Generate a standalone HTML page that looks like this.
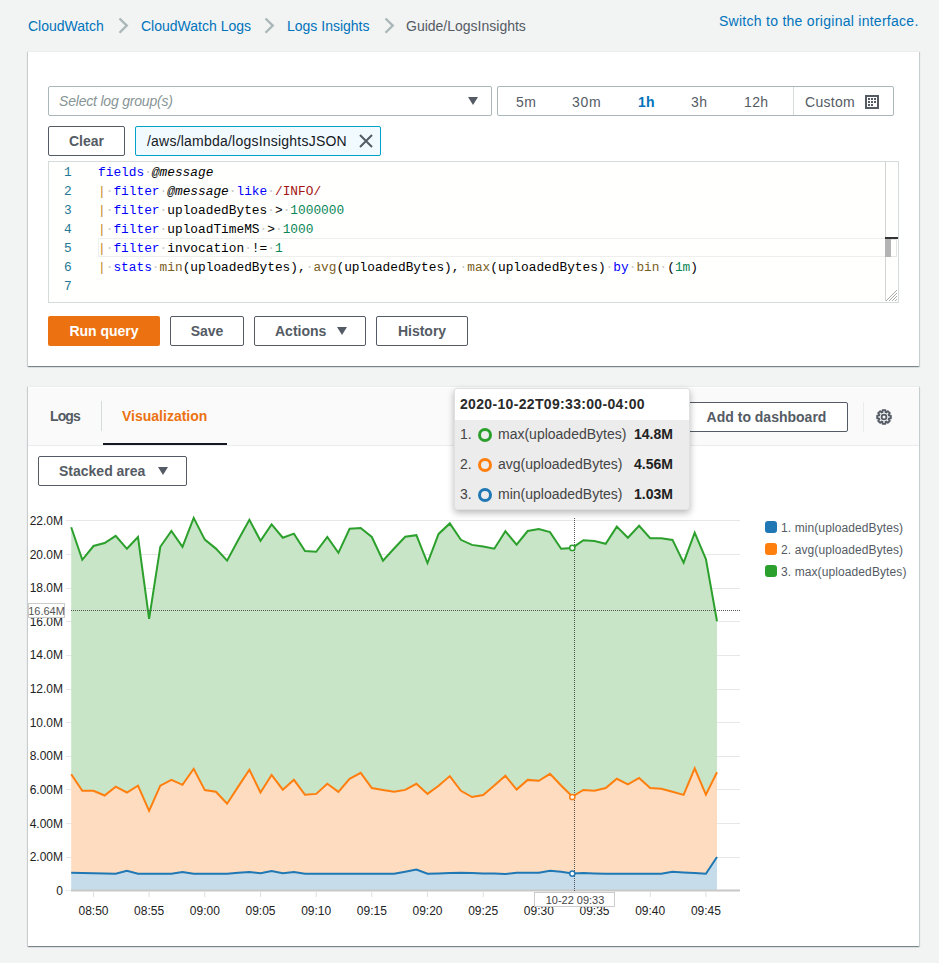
<!DOCTYPE html>
<html><head><meta charset="utf-8">
<style>
*{box-sizing:border-box;margin:0;padding:0}
html,body{width:939px;height:963px;overflow:hidden;background:#f2f3f3;font-family:"Liberation Sans",sans-serif;color:#16191f;position:relative}
.abs{position:absolute}
.crumb{position:absolute;top:18px;font-size:14px;color:#0073bb;white-space:nowrap}
.crumb.g{color:#545b64}
.sep{position:absolute;top:18px;width:9px;height:9px;border-right:1.6px solid #aab7b8;border-top:1.6px solid #aab7b8;transform:rotate(45deg)}
.panel{position:absolute;background:#fff;border-top:1px solid #eaeded;box-shadow:0 1px 1px 0 rgba(0,28,36,.35),1px 1px 1px 0 rgba(0,28,36,.12),-1px 1px 1px 0 rgba(0,28,36,.12)}
.btn{position:absolute;border:1px solid #545b64;border-radius:2px;background:#fff;color:#545b64;font-weight:bold;font-size:14px;text-align:center;white-space:nowrap}
.mono{font-family:"Liberation Mono",monospace;font-size:12.82px;white-space:pre}
.mono .k{color:#0000ff}
.code{color:#000}
.ln{color:#237893;line-height:19px}
.code{line-height:19px}
.code em{font-style:italic}
.code .p{color:#c4891c}
.code .r{color:#a31515}
.code .n{color:#098658}
.code .f{color:#795e26}
.code .d{font-style:normal;color:#c8c8c8}
.tab{font-size:14px;font-weight:bold}
.leg{font-size:12px;color:#545b64;letter-spacing:.1px}
.tt{font-size:14px;color:#444;white-space:nowrap}
.circ{width:14px;height:14px;border:3px solid;border-radius:50%}
</style></head><body>
<!-- breadcrumb -->
<div class="crumb" style="left:28px">CloudWatch</div>
<svg class="abs" style="left:118px;top:17px" width="12" height="18" viewBox="0 0 12 18"><polyline points="1.5,1.5 8.8,8.6 1.5,15.7" fill="none" stroke="#aab7b8" stroke-width="2.3"/></svg>
<div class="crumb" style="left:141px">CloudWatch Logs</div>
<svg class="abs" style="left:264px;top:17px" width="12" height="18" viewBox="0 0 12 18"><polyline points="1.5,1.5 8.8,8.6 1.5,15.7" fill="none" stroke="#aab7b8" stroke-width="2.3"/></svg>
<div class="crumb" style="left:287px">Logs Insights</div>
<svg class="abs" style="left:384px;top:17px" width="12" height="18" viewBox="0 0 12 18"><polyline points="1.5,1.5 8.8,8.6 1.5,15.7" fill="none" stroke="#aab7b8" stroke-width="2.3"/></svg>
<div class="crumb g" style="left:406px">Guide/LogsInsights</div>
<div class="crumb" style="left:719px;top:13px;letter-spacing:.27px">Switch to the original interface.</div>

<!-- panel 1 -->
<div class="panel" style="left:28px;top:51px;width:891px;height:315px"></div>
<div class="abs" style="left:48px;top:86px;width:444px;height:30px;border:1px solid #aab7b8;border-radius:2px;background:#fff"></div>
<div class="abs" style="left:59px;top:93px;font-size:14px;font-style:italic;color:#879596;letter-spacing:-.2px">Select log group(s)</div>
<div class="abs" style="left:468px;top:97px;width:0;height:0;border-left:5.5px solid transparent;border-right:5.5px solid transparent;border-top:8px solid #545b64"></div>

<div class="abs" style="left:497px;top:86px;width:397px;height:30px;border:1px solid #aab7b8;border-radius:2px"></div>
<div class="abs" style="left:793px;top:87px;width:1px;height:28px;background:#d5dbdb"></div>
<div class="abs" style="left:516px;top:94px;font-size:14px;color:#545b64;letter-spacing:.5px">5m</div>
<div class="abs" style="left:572px;top:94px;font-size:14px;color:#545b64;letter-spacing:.7px">30m</div>
<div class="abs" style="left:638px;top:94px;font-size:14px;color:#0073bb;font-weight:bold;letter-spacing:.3px">1h</div>
<div class="abs" style="left:691px;top:94px;font-size:14px;color:#545b64;letter-spacing:.5px">3h</div>
<div class="abs" style="left:744px;top:94px;font-size:14px;color:#545b64;letter-spacing:.4px">12h</div>
<div class="abs" style="left:805px;top:94px;font-size:14px;color:#545b64;letter-spacing:.3px">Custom</div>
<svg class="abs" style="left:865px;top:95px" width="14" height="14" viewBox="0 0 14 14"><rect x="1" y="1" width="12" height="12" fill="none" stroke="#545b64" stroke-width="2"/><g fill="#545b64"><rect x="3" y="3" width="2" height="2"/><rect x="6" y="3" width="2" height="2"/><rect x="9" y="3" width="2" height="2"/><rect x="3" y="6" width="2" height="2"/><rect x="6" y="6" width="2" height="2"/><rect x="9" y="6" width="2" height="2"/><rect x="3" y="9" width="2" height="2"/><rect x="6" y="9" width="2" height="2"/></g></svg>

<div class="btn" style="left:48px;top:126px;width:77px;height:30px;line-height:28px">Clear</div>
<div class="abs" style="left:135px;top:126px;width:246px;height:30px;border:1px solid #00a1c9;border-radius:2px;background:#f1faff"></div>
<div class="abs" style="left:147px;top:133px;font-size:14px;color:#16191f;letter-spacing:.22px">/aws/lambda/logsInsightsJSON</div>
<svg class="abs" style="left:358px;top:133px" width="16" height="16" viewBox="0 0 16 16"><path d="M2 2L14 14M14 2L2 14" stroke="#545b64" stroke-width="2"/></svg>

<!-- editor -->
<div class="abs" style="left:48px;top:161px;width:851px;height:142px;border:1px solid #d5dbdb;background:#fffffd"></div>

<!-- editor content -->
<div class="abs" style="left:98px;top:238px;width:787px;height:19px;border:1px solid #eeeeee;border-right:none"></div>
<div class="abs" style="left:885px;top:162px;width:1px;height:139px;background:#d5d5d5"></div>
<div class="abs" style="left:885px;top:237px;width:13px;height:2px;background:#333"></div>
<div class="abs" style="left:885px;top:239px;width:6px;height:18px;background:#b4b4b4"></div>
<div class="abs" style="left:891px;top:239px;width:6px;height:18px;border:1px solid #e5e5e5;border-left:none"></div>
<svg class="abs" style="left:884px;top:288px" width="14" height="14" viewBox="0 0 14 14"><g stroke="#aaa" stroke-width="1"><line x1="2" y1="13" x2="13" y2="2"/><line x1="5" y1="13" x2="13" y2="5"/><line x1="8" y1="13" x2="13" y2="8"/><line x1="11" y1="13" x2="13" y2="11"/></g></svg>
<div class="abs mono ln" style="left:64px;top:163px">1
2
3
4
5
6
7</div>
<div class="abs mono code" style="left:98px;top:163px"><span class="k">fields</span><i class="d">·</i><em>@message</em>
<span class="p">|</span><i class="d">·</i><span class="k">filter</span><i class="d">·</i><em>@message</em><i class="d">·</i><span class="k">like</span><i class="d">·</i><span class="r">/INFO/</span>
<span class="p">|</span><i class="d">·</i><span class="k">filter</span><i class="d">·</i>uploadedBytes<i class="d">·</i>&gt;<i class="d">·</i><span class="n">1000000</span>
<span class="p">|</span><i class="d">·</i><span class="k">filter</span><i class="d">·</i>uploadTimeMS<i class="d">·</i>&gt;<i class="d">·</i><span class="n">1000</span>
<span class="p">|</span><i class="d">·</i><span class="k">filter</span><i class="d">·</i>invocation<i class="d">·</i>!=<i class="d">·</i><span class="n">1</span>
<span class="p">|</span><i class="d">·</i><span class="k">stats</span><i class="d">·</i><span class="f">min</span>(uploadedBytes),<i class="d">·</i><span class="f">avg</span>(uploadedBytes),<i class="d">·</i><span class="f">max</span>(uploadedBytes)<i class="d">·</i><span class="k">by</span><i class="d">·</i><span class="f">bin</span><i class="d">·</i>(<span class="n">1m</span>)
</div>

<!-- buttons -->
<div class="abs" style="left:48px;top:316px;width:112px;height:30px;background:#ec7211;border-radius:2px;color:#fff;font-weight:bold;font-size:14px;text-align:center;line-height:30px">Run query</div>
<div class="btn" style="left:170px;top:316px;width:74px;height:30px;line-height:28px">Save</div>
<div class="btn" style="left:254px;top:316px;width:112px;height:30px;line-height:28px;text-align:left;padding-left:20px">Actions</div>
<div class="abs" style="left:337px;top:327px;width:0;height:0;border-left:5.5px solid transparent;border-right:5.5px solid transparent;border-top:8px solid #545b64"></div>
<div class="btn" style="left:376px;top:316px;width:92px;height:30px;line-height:28px">History</div>

<!-- panel 2 -->
<div class="panel" style="left:28px;top:386px;width:891px;height:560px"></div>

<!-- tabs header -->
<div class="abs" style="left:28px;top:388px;width:891px;height:58px;background:#fafafa;border-bottom:1px solid #eaeded"></div>
<div class="abs tab" style="left:50px;top:408px;color:#545b64;letter-spacing:-.9px">Logs</div>
<div class="abs" style="left:101px;top:401px;width:1px;height:30px;background:#d5dbdb"></div>
<div class="abs tab" style="left:122px;top:408px;color:#ec7211">Visualization</div>
<div class="abs" style="left:103px;top:443px;width:124px;height:2px;background:#16191f"></div>
<div class="btn" style="left:680px;top:402px;width:168px;height:30px;line-height:28px;padding-left:5px">Add to dashboard</div>
<div class="abs" style="left:863px;top:402px;width:1px;height:30px;background:#eaeded"></div>
<svg class="abs" style="left:875px;top:408px" width="18" height="18" viewBox="0 0 18 18"><path d="M7.51,4.12 L7.54,2.15 L10.46,2.15 L10.49,4.12 L11.39,4.50 L12.81,3.13 L14.87,5.19 L13.50,6.61 L13.88,7.51 L15.85,7.54 L15.85,10.46 L13.88,10.49 L13.50,11.39 L14.87,12.81 L12.81,14.87 L11.39,13.50 L10.49,13.88 L10.46,15.85 L7.54,15.85 L7.51,13.88 L6.61,13.50 L5.19,14.87 L3.13,12.81 L4.50,11.39 L4.12,10.49 L2.15,10.46 L2.15,7.54 L4.12,7.51 L4.50,6.61 L3.13,5.19 L5.19,3.13 L6.61,4.50Z" fill="none" stroke="#545b64" stroke-width="1.8" stroke-linejoin="round"/><circle cx="9" cy="9" r="2.4" fill="none" stroke="#545b64" stroke-width="1.8"/></svg>

<div class="btn" style="left:38px;top:456px;width:149px;height:30px;line-height:28px;text-align:left;padding-left:20px">Stacked area</div>
<div class="abs" style="left:158px;top:467px;width:0;height:0;border-left:5px solid transparent;border-right:5px solid transparent;border-top:8.5px solid #545b64"></div>

<svg class="abs" style="left:0;top:0" width="939" height="963" viewBox="0 0 939 963">
<rect x="66" y="889.9" width="5" height="1" fill="#e6e8e8"/>
<rect x="66" y="857" width="674" height="1" fill="#e6e8e8"/>
<rect x="66" y="823" width="674" height="1" fill="#e6e8e8"/>
<rect x="66" y="789" width="674" height="1" fill="#e6e8e8"/>
<rect x="66" y="756" width="674" height="1" fill="#e6e8e8"/>
<rect x="66" y="722" width="674" height="1" fill="#e6e8e8"/>
<rect x="66" y="689" width="674" height="1" fill="#e6e8e8"/>
<rect x="66" y="655" width="674" height="1" fill="#e6e8e8"/>
<rect x="66" y="621" width="674" height="1" fill="#e6e8e8"/>
<rect x="66" y="588" width="674" height="1" fill="#e6e8e8"/>
<rect x="66" y="554" width="674" height="1" fill="#e6e8e8"/>
<rect x="66" y="520" width="674" height="1" fill="#e6e8e8"/>
<rect x="93.0" y="892" width="1" height="5" fill="#dcdede"/>
<rect x="148.6" y="892" width="1" height="5" fill="#dcdede"/>
<rect x="204.3" y="892" width="1" height="5" fill="#dcdede"/>
<rect x="260.0" y="892" width="1" height="5" fill="#dcdede"/>
<rect x="315.7" y="892" width="1" height="5" fill="#dcdede"/>
<rect x="371.3" y="892" width="1" height="5" fill="#dcdede"/>
<rect x="427.0" y="892" width="1" height="5" fill="#dcdede"/>
<rect x="482.7" y="892" width="1" height="5" fill="#dcdede"/>
<rect x="538.3" y="892" width="1" height="5" fill="#dcdede"/>
<rect x="594.0" y="892" width="1" height="5" fill="#dcdede"/>
<rect x="649.7" y="892" width="1" height="5" fill="#dcdede"/>
<rect x="705.4" y="892" width="1" height="5" fill="#dcdede"/>
<path d="M71.2,527.3 L82.3,559.8 L93.5,546.0 L104.6,543.0 L115.7,535.8 L126.9,548.8 L138.0,537.0 L149.1,618.8 L160.3,546.8 L171.4,530.9 L182.5,546.8 L193.7,517.9 L204.8,539.6 L215.9,548.6 L227.1,560.6 L238.2,540.0 L249.4,519.8 L260.5,540.8 L271.6,524.4 L282.8,537.7 L293.9,533.6 L305.0,551.0 L316.2,551.8 L327.3,537.0 L338.4,552.8 L349.6,528.8 L360.7,528.0 L371.8,537.0 L383.0,560.7 L394.1,548.5 L405.2,536.7 L416.4,535.2 L427.5,563.0 L438.6,533.9 L449.8,523.4 L460.9,539.8 L472.0,544.9 L483.2,546.5 L494.3,548.7 L505.4,531.3 L516.6,544.6 L527.7,531.0 L538.8,529.0 L550.0,532.1 L561.1,548.7 L572.3,547.9 L583.4,540.2 L594.5,541.0 L605.7,543.8 L616.8,526.6 L627.9,537.7 L639.1,525.8 L650.2,538.2 L661.3,538.2 L672.5,539.9 L683.6,562.6 L694.7,532.7 L705.9,559.0 L717.0,621.3 L717.0,772.2 L705.9,794.6 L694.7,768.3 L683.6,794.9 L672.5,791.8 L661.3,788.8 L650.2,788.0 L639.1,778.0 L627.9,784.4 L616.8,778.8 L605.7,788.0 L594.5,790.7 L583.4,789.9 L572.3,796.5 L561.1,785.5 L550.0,773.8 L538.8,780.8 L527.7,779.9 L516.6,789.6 L505.4,775.8 L494.3,785.5 L483.2,795.1 L472.0,797.0 L460.9,790.8 L449.8,776.1 L438.6,785.7 L427.5,793.9 L416.4,783.8 L405.2,789.9 L394.1,791.8 L383.0,789.9 L371.8,788.0 L360.7,772.8 L349.6,778.9 L338.4,791.8 L327.3,783.8 L316.2,793.9 L305.0,794.8 L293.9,779.8 L282.8,789.7 L271.6,774.9 L260.5,792.5 L249.4,769.8 L238.2,786.6 L227.1,803.7 L215.9,791.8 L204.8,790.1 L193.7,768.8 L182.5,784.8 L171.4,779.8 L160.3,785.7 L149.1,810.8 L138.0,785.7 L126.9,792.5 L115.7,786.6 L104.6,795.5 L93.5,790.8 L82.3,790.8 L71.2,774.2Z" fill="#c9e5c8"/>
<path d="M71.2,774.2 L82.3,790.8 L93.5,790.8 L104.6,795.5 L115.7,786.6 L126.9,792.5 L138.0,785.7 L149.1,810.8 L160.3,785.7 L171.4,779.8 L182.5,784.8 L193.7,768.8 L204.8,790.1 L215.9,791.8 L227.1,803.7 L238.2,786.6 L249.4,769.8 L260.5,792.5 L271.6,774.9 L282.8,789.7 L293.9,779.8 L305.0,794.8 L316.2,793.9 L327.3,783.8 L338.4,791.8 L349.6,778.9 L360.7,772.8 L371.8,788.0 L383.0,789.9 L394.1,791.8 L405.2,789.9 L416.4,783.8 L427.5,793.9 L438.6,785.7 L449.8,776.1 L460.9,790.8 L472.0,797.0 L483.2,795.1 L494.3,785.5 L505.4,775.8 L516.6,789.6 L527.7,779.9 L538.8,780.8 L550.0,773.8 L561.1,785.5 L572.3,796.5 L583.4,789.9 L594.5,790.7 L605.7,788.0 L616.8,778.8 L627.9,784.4 L639.1,778.0 L650.2,788.0 L661.3,788.8 L672.5,791.8 L683.6,794.9 L694.7,768.3 L705.9,794.6 L717.0,772.2 L717.0,857.0 L705.9,873.8 L694.7,873.1 L683.6,872.4 L672.5,871.7 L661.3,873.8 L650.2,873.8 L639.1,873.8 L627.9,873.8 L616.8,873.8 L605.7,873.8 L594.5,873.4 L583.4,872.9 L572.3,873.6 L561.1,871.7 L550.0,870.7 L538.8,872.8 L527.7,872.8 L516.6,872.8 L505.4,874.0 L494.3,873.6 L483.2,873.4 L472.0,873.0 L460.9,872.8 L449.8,873.0 L438.6,873.4 L427.5,873.8 L416.4,869.6 L405.2,871.7 L394.1,873.8 L383.0,873.8 L371.8,873.8 L360.7,873.8 L349.6,873.8 L338.4,873.8 L327.3,873.8 L316.2,873.8 L305.0,873.8 L293.9,871.9 L282.8,873.2 L271.6,870.9 L260.5,873.2 L249.4,871.9 L238.2,872.8 L227.1,873.8 L215.9,873.8 L204.8,873.8 L193.7,873.8 L182.5,871.9 L171.4,873.8 L160.3,873.8 L149.1,873.8 L138.0,873.8 L126.9,870.9 L115.7,873.8 L104.6,873.6 L93.5,873.2 L82.3,873.0 L71.2,872.8Z" fill="#fedcc0"/>
<path d="M71.2,872.8 L82.3,873.0 L93.5,873.2 L104.6,873.6 L115.7,873.8 L126.9,870.9 L138.0,873.8 L149.1,873.8 L160.3,873.8 L171.4,873.8 L182.5,871.9 L193.7,873.8 L204.8,873.8 L215.9,873.8 L227.1,873.8 L238.2,872.8 L249.4,871.9 L260.5,873.2 L271.6,870.9 L282.8,873.2 L293.9,871.9 L305.0,873.8 L316.2,873.8 L327.3,873.8 L338.4,873.8 L349.6,873.8 L360.7,873.8 L371.8,873.8 L383.0,873.8 L394.1,873.8 L405.2,871.7 L416.4,869.6 L427.5,873.8 L438.6,873.4 L449.8,873.0 L460.9,872.8 L472.0,873.0 L483.2,873.4 L494.3,873.6 L505.4,874.0 L516.6,872.8 L527.7,872.8 L538.8,872.8 L550.0,870.7 L561.1,871.7 L572.3,873.6 L583.4,872.9 L594.5,873.4 L605.7,873.8 L616.8,873.8 L627.9,873.8 L639.1,873.8 L650.2,873.8 L661.3,873.8 L672.5,871.7 L683.6,872.4 L694.7,873.1 L705.9,873.8 L717.0,857.0 L717.0,890.0 L705.9,890.0 L694.7,890.0 L683.6,890.0 L672.5,890.0 L661.3,890.0 L650.2,890.0 L639.1,890.0 L627.9,890.0 L616.8,890.0 L605.7,890.0 L594.5,890.0 L583.4,890.0 L572.3,890.0 L561.1,890.0 L550.0,890.0 L538.8,890.0 L527.7,890.0 L516.6,890.0 L505.4,890.0 L494.3,890.0 L483.2,890.0 L472.0,890.0 L460.9,890.0 L449.8,890.0 L438.6,890.0 L427.5,890.0 L416.4,890.0 L405.2,890.0 L394.1,890.0 L383.0,890.0 L371.8,890.0 L360.7,890.0 L349.6,890.0 L338.4,890.0 L327.3,890.0 L316.2,890.0 L305.0,890.0 L293.9,890.0 L282.8,890.0 L271.6,890.0 L260.5,890.0 L249.4,890.0 L238.2,890.0 L227.1,890.0 L215.9,890.0 L204.8,890.0 L193.7,890.0 L182.5,890.0 L171.4,890.0 L160.3,890.0 L149.1,890.0 L138.0,890.0 L126.9,890.0 L115.7,890.0 L104.6,890.0 L93.5,890.0 L82.3,890.0 L71.2,890.0Z" fill="#c6dcea"/>
<polyline points="71.2,872.8 82.3,873.0 93.5,873.2 104.6,873.6 115.7,873.8 126.9,870.9 138.0,873.8 149.1,873.8 160.3,873.8 171.4,873.8 182.5,871.9 193.7,873.8 204.8,873.8 215.9,873.8 227.1,873.8 238.2,872.8 249.4,871.9 260.5,873.2 271.6,870.9 282.8,873.2 293.9,871.9 305.0,873.8 316.2,873.8 327.3,873.8 338.4,873.8 349.6,873.8 360.7,873.8 371.8,873.8 383.0,873.8 394.1,873.8 405.2,871.7 416.4,869.6 427.5,873.8 438.6,873.4 449.8,873.0 460.9,872.8 472.0,873.0 483.2,873.4 494.3,873.6 505.4,874.0 516.6,872.8 527.7,872.8 538.8,872.8 550.0,870.7 561.1,871.7 572.3,873.6 583.4,872.9 594.5,873.4 605.7,873.8 616.8,873.8 627.9,873.8 639.1,873.8 650.2,873.8 661.3,873.8 672.5,871.7 683.6,872.4 694.7,873.1 705.9,873.8 717.0,857.0" fill="none" stroke="#1f77b4" stroke-width="2" stroke-linejoin="miter"/>
<polyline points="71.2,774.2 82.3,790.8 93.5,790.8 104.6,795.5 115.7,786.6 126.9,792.5 138.0,785.7 149.1,810.8 160.3,785.7 171.4,779.8 182.5,784.8 193.7,768.8 204.8,790.1 215.9,791.8 227.1,803.7 238.2,786.6 249.4,769.8 260.5,792.5 271.6,774.9 282.8,789.7 293.9,779.8 305.0,794.8 316.2,793.9 327.3,783.8 338.4,791.8 349.6,778.9 360.7,772.8 371.8,788.0 383.0,789.9 394.1,791.8 405.2,789.9 416.4,783.8 427.5,793.9 438.6,785.7 449.8,776.1 460.9,790.8 472.0,797.0 483.2,795.1 494.3,785.5 505.4,775.8 516.6,789.6 527.7,779.9 538.8,780.8 550.0,773.8 561.1,785.5 572.3,796.5 583.4,789.9 594.5,790.7 605.7,788.0 616.8,778.8 627.9,784.4 639.1,778.0 650.2,788.0 661.3,788.8 672.5,791.8 683.6,794.9 694.7,768.3 705.9,794.6 717.0,772.2" fill="none" stroke="#ff7f0e" stroke-width="2"/>
<polyline points="71.2,527.3 82.3,559.8 93.5,546.0 104.6,543.0 115.7,535.8 126.9,548.8 138.0,537.0 149.1,618.8 160.3,546.8 171.4,530.9 182.5,546.8 193.7,517.9 204.8,539.6 215.9,548.6 227.1,560.6 238.2,540.0 249.4,519.8 260.5,540.8 271.6,524.4 282.8,537.7 293.9,533.6 305.0,551.0 316.2,551.8 327.3,537.0 338.4,552.8 349.6,528.8 360.7,528.0 371.8,537.0 383.0,560.7 394.1,548.5 405.2,536.7 416.4,535.2 427.5,563.0 438.6,533.9 449.8,523.4 460.9,539.8 472.0,544.9 483.2,546.5 494.3,548.7 505.4,531.3 516.6,544.6 527.7,531.0 538.8,529.0 550.0,532.1 561.1,548.7 572.3,547.9 583.4,540.2 594.5,541.0 605.7,543.8 616.8,526.6 627.9,537.7 639.1,525.8 650.2,538.2 661.3,538.2 672.5,539.9 683.6,562.6 694.7,532.7 705.9,559.0 717.0,621.3" fill="none" stroke="#2ca02c" stroke-width="2"/>
<rect x="71" y="889.5" width="669" height="2" fill="#c8c8c8"/>
<g font-family="Liberation Sans" font-size="12" fill="#222">
<text x="63" y="894.9" text-anchor="end">0</text>
<text x="63" y="861.3" text-anchor="end">2.00M</text>
<text x="63" y="827.6" text-anchor="end">4.00M</text>
<text x="63" y="794.0" text-anchor="end">6.00M</text>
<text x="63" y="760.4" text-anchor="end">8.00M</text>
<text x="63" y="726.7" text-anchor="end">10.0M</text>
<text x="63" y="693.1" text-anchor="end">12.0M</text>
<text x="63" y="659.4" text-anchor="end">14.0M</text>
<text x="63" y="625.8" text-anchor="end">16.0M</text>
<text x="63" y="592.2" text-anchor="end">18.0M</text>
<text x="63" y="558.5" text-anchor="end">20.0M</text>
<text x="63" y="524.9" text-anchor="end">22.0M</text>
<text x="93.5" y="914.5" text-anchor="middle">08:50</text>
<text x="149.1" y="914.5" text-anchor="middle">08:55</text>
<text x="204.8" y="914.5" text-anchor="middle">09:00</text>
<text x="260.5" y="914.5" text-anchor="middle">09:05</text>
<text x="316.2" y="914.5" text-anchor="middle">09:10</text>
<text x="371.8" y="914.5" text-anchor="middle">09:15</text>
<text x="427.5" y="914.5" text-anchor="middle">09:20</text>
<text x="483.2" y="914.5" text-anchor="middle">09:25</text>
<text x="538.8" y="914.5" text-anchor="middle">09:30</text>
<text x="594.5" y="914.5" text-anchor="middle">09:35</text>
<text x="650.2" y="914.5" text-anchor="middle">09:40</text>
<text x="705.9" y="914.5" text-anchor="middle">09:45</text>
</g>
<line x1="71" y1="610.5" x2="740" y2="610.5" stroke="#555" stroke-width="1" stroke-dasharray="1,1"/>
<line x1="574.5" y1="518" x2="574.5" y2="893" stroke="#555" stroke-width="1" stroke-dasharray="1,1"/>
<circle cx="572.3" cy="547.9" r="2.6" fill="#fff" stroke="#2ca02c" stroke-width="1.5"/>
<circle cx="572.3" cy="797" r="2.6" fill="#fff" stroke="#ff7f0e" stroke-width="1.5"/>
<circle cx="572.3" cy="873.6" r="2.6" fill="#fff" stroke="#1f77b4" stroke-width="1.5"/>
<rect x="28.5" y="603.5" width="36" height="14" fill="#fff" stroke="#ccc"/>
<text x="46.5" y="614.5" font-family="Liberation Sans" font-size="11" fill="#555" text-anchor="middle">16.64M</text>
<rect x="534.5" y="892.5" width="80" height="14" fill="#fff" stroke="#ccc"/>
<text x="575" y="903.5" font-family="Liberation Sans" font-size="11" fill="#444" text-anchor="middle">10-22 09:33</text>
</svg>

<!-- legend -->
<div class="abs" style="left:765px;top:521px;width:12px;height:12px;border-radius:3px;background:#1f77b4"></div>
<div class="abs" style="left:765px;top:543px;width:12px;height:12px;border-radius:3px;background:#ff7f0e"></div>
<div class="abs" style="left:765px;top:565px;width:12px;height:12px;border-radius:3px;background:#2ca02c"></div>
<div class="abs leg" style="left:781px;top:521px">1. min(uploadedBytes)</div>
<div class="abs leg" style="left:781px;top:543px">2. avg(uploadedBytes)</div>
<div class="abs leg" style="left:781px;top:565px">3. max(uploadedBytes)</div>

<!-- tooltip -->
<div class="abs" style="left:454px;top:388px;width:236px;height:122px;background:#ececec;border:1px solid #e0e0e0;border-radius:3px;box-shadow:0 3px 7px 0 rgba(0,0,0,.28);overflow:hidden">
<div style="height:31px;background:#fff"></div>
</div>
<div class="abs tt" style="left:460px;top:396px;font-weight:bold;color:#2a2a2a;letter-spacing:.33px">2020-10-22T09:33:00-04:00</div>
<div class="abs tt" style="left:460px;top:426px">1.</div>
<div class="abs tt" style="left:460px;top:456px">2.</div>
<div class="abs tt" style="left:460px;top:486px">3.</div>
<div class="abs circ" style="left:478px;top:428px;border-color:#2ca02c"></div>
<div class="abs circ" style="left:478px;top:458px;border-color:#ff7f0e"></div>
<div class="abs circ" style="left:478px;top:488px;border-color:#1f77b4"></div>
<div class="abs tt" style="left:498px;top:426px">max(uploadedBytes)</div>
<div class="abs tt" style="left:498px;top:456px">avg(uploadedBytes)</div>
<div class="abs tt" style="left:498px;top:486px">min(uploadedBytes)</div>
<div class="abs tt" style="left:634px;top:426px;font-weight:bold;color:#222">14.8M</div>
<div class="abs tt" style="left:634px;top:456px;font-weight:bold;color:#222">4.56M</div>
<div class="abs tt" style="left:634px;top:486px;font-weight:bold;color:#222">1.03M</div>

</body></html>
